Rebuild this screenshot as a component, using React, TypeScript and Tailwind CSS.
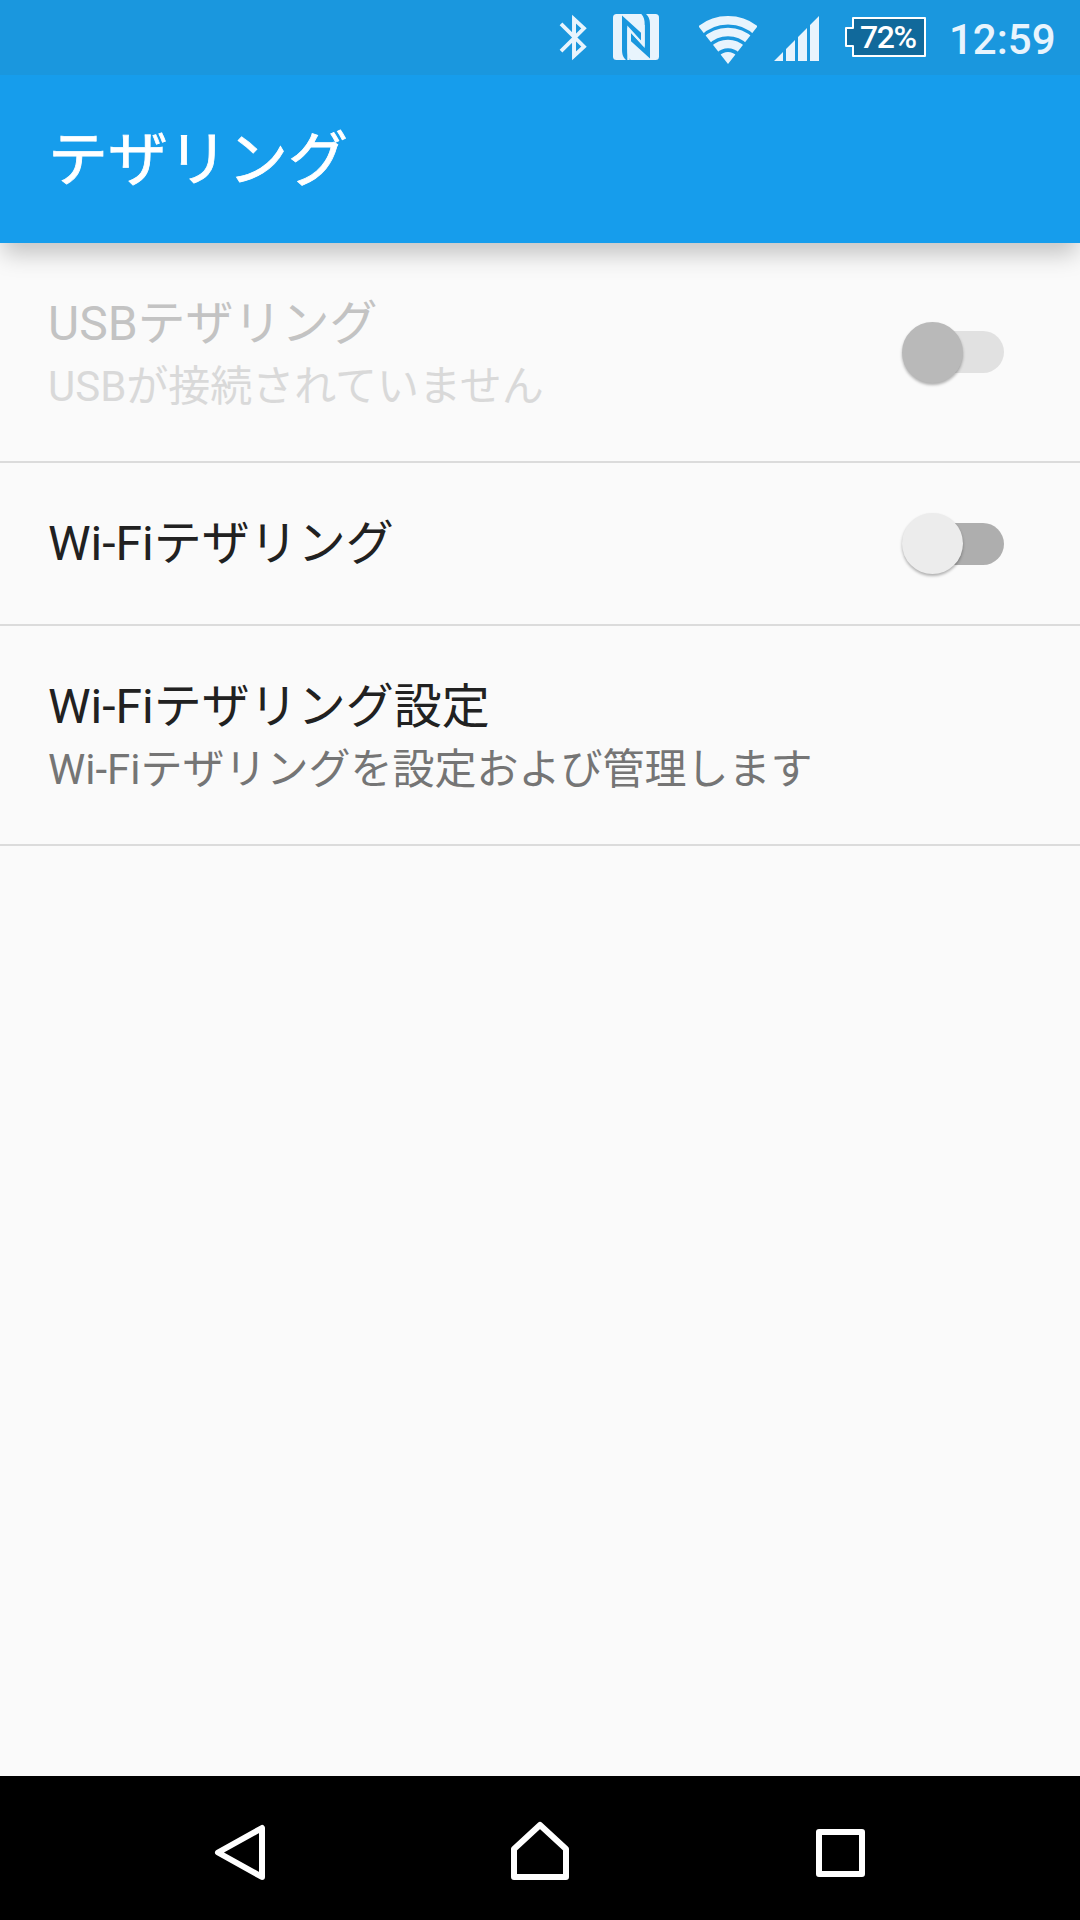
import clsx from "clsx";

type Setting = {
  title: string;
  summary?: string;
  disabled?: boolean;
  hasSwitch?: boolean;
};

const settings: Setting[] = [
  {
    title: "USBテザリング",
    summary: "USBが接続されていません",
    disabled: true,
    hasSwitch: true,
  },
  { title: "Wi-Fiテザリング", hasSwitch: true },
  {
    title: "Wi-Fiテザリング設定",
    summary: "Wi-Fiテザリングを設定および管理します",
  },
];

function BluetoothIcon() {
  return (
    <svg width="28" height="47" viewBox="0 0 28 47" className="ml-[559px]">
      <path
        d="M2 9.800L25 32.700L15 42V5L25 14.300L2 37.200"
        fill="none"
        stroke="#e8f4fd"
        strokeWidth="3.8"
      />
      <path d="M13.300 2L17 5V42L13.300 45Z" fill="#e8f4fd" />
    </svg>
  );
}

function NfcIcon() {
  return (
    <svg width="46" height="47" viewBox="0 0 46 47" className="ml-[26px]">
      <rect width="46" height="46" rx="3.5" fill="#e8f4fd" />
      <g fill="#1a97de">
        <path d="M9 1.500L28 18.700V27.700L14.300 13.300V35C14.300 40 15 43 17.700 46H13C9.500 43 9 39 9 35Z" />
        <path d="M37 44.500L18 27.300V18.300L31.700 32.700V11C31.700 6 31 3 28.300 0H33C36.500 3 37 7 37 11Z" />
      </g>
      <path
        d="M15.500 46V14.500L30.500 31V11"
        fill="none"
        stroke="#e8f4fd"
        strokeWidth="2.4"
      />
      <path
        d="M15.500 15V35M30.500 31L15.500 15"
        fill="none"
        stroke="#e8f4fd"
        strokeWidth="1.5"
      />
    </svg>
  );
}

function WifiIcon() {
  return (
    <svg
      width="58"
      height="48"
      viewBox="0 0 58 48"
      className="mt-[5px] ml-[40px]"
    >
      <clipPath id="wifi-cone">
        <path d="M29 48L-4 6V-2H62V6Z" />
      </clipPath>
      <g clipPath="url(#wifi-cone)" fill="none" stroke="#e8f4fd">
        <circle cx="29" cy="48" r="43.700" strokeWidth="8.600" />
        <circle cx="29" cy="48" r="32" strokeWidth="8.600" />
        <circle cx="29" cy="48" r="20" strokeWidth="8.600" />
        <circle cx="29" cy="48" r="6" strokeWidth="12" />
      </g>
    </svg>
  );
}

function SignalIcon() {
  return (
    <svg
      width="45"
      height="45"
      viewBox="0 0 45 45"
      fill="#e8f4fd"
      className="mt-[2px] ml-[17px]"
    >
      <path d="M0 45L9 36V45ZM12 45V33L21 24V45ZM24 45V21L33 12V45ZM36 45V9L45 0V45Z" />
    </svg>
  );
}

function Battery() {
  return (
    <div className="relative mb-px ml-[26px] h-10 w-[81px]">
      <svg width="81" height="40" viewBox="0 0 81 40" className="block">
        <path
          d="M8 1H80V39H8V29H1V11H8Z"
          fill="#11699b"
          stroke="#fff"
          strokeWidth="2"
          strokeLinejoin="round"
        />
      </svg>
      <span className="absolute top-0 left-[15px] text-[32px] leading-10 font-medium tracking-[-1.5px] text-white">
        72%
      </span>
    </div>
  );
}

function StatusBar() {
  return (
    <div className="z-20 flex h-[75px] shrink-0 items-center bg-[#1a97de]">
      <BluetoothIcon />
      <NfcIcon />
      <WifiIcon />
      <SignalIcon />
      <Battery />
      <span className="mt-[4px] ml-[23px] text-[42px] leading-none font-medium text-[#e8f4fd]">
        12:59
      </span>
    </div>
  );
}

function Switch({ disabled }: { disabled?: boolean }) {
  return (
    <span
      role="switch"
      aria-checked={false}
      className="mr-[76px] flex h-[61px] w-[102px] items-center"
    >
      <span
        className={clsx(
          "z-10 size-[61px] shrink-0 rounded-full shadow-[0_2px_3px_rgba(0,0,0,0.3)]",
          disabled ? "bg-[#b9b9b9]" : "bg-[#ececec]"
        )}
      />
      <span
        className={clsx(
          "-ml-10 h-[42px] flex-1 rounded-full",
          disabled ? "bg-[#e1e1e1]" : "bg-[#aeaeae]"
        )}
      />
    </span>
  );
}

function SettingRow({ setting }: { setting: Setting }) {
  const { title, summary, disabled, hasSwitch } = setting;

  return (
    <li
      className={clsx(
        "flex items-center justify-between border-b-2 border-[#dbdbdb] pl-12",
        summary ? "h-[220px]" : "h-[163px]"
      )}
    >
      <div className={clsx("whitespace-nowrap", summary && "pt-[5px]")}>
        <p
          className={clsx(
            "text-[48px] leading-[64px]",
            disabled ? "text-[#c3c3c3]" : "text-[#212121]"
          )}
        >
          {title}
        </p>
        {summary && (
          <p
            className={clsx(
              "text-[42px] leading-[61px]",
              disabled ? "text-[#d9d9d9]" : "text-[#757575]"
            )}
          >
            {summary}
          </p>
        )}
      </div>
      {hasSwitch && <Switch disabled={disabled} />}
    </li>
  );
}

function NavBar() {
  return (
    <nav className="flex h-36 items-center bg-black pt-[5px]">
      <svg width="1080" height="60" viewBox="0 0 1080 60">
        <g
          fill="none"
          stroke="#fff"
          strokeWidth="6"
          strokeLinejoin="round"
        >
          <path d="M262 7V56L218 31.500Z" />
          <path d="M514 56V28L540 4L566 28V56Z" />
          <path d="M819 11H862V53H819Z" />
        </g>
      </svg>
    </nav>
  );
}

export default function App() {
  return (
    <div className="flex h-[1920px] w-[1080px] flex-col overflow-hidden bg-[#fafafa] font-[Roboto,'Noto_Sans_CJK_JP',sans-serif]">
      <StatusBar />
      <header className="z-10 flex h-[168px] shrink-0 items-center bg-[#169dec] pl-12 shadow-[0_14px_22px_-3px_rgba(0,0,0,0.22)]">
        <h1 className="pt-[3px] text-[60px] leading-none text-white [-webkit-text-stroke:0.8px_#fff]">
          テザリング
        </h1>
      </header>
      <ul className="flex-1">
        {settings.map((setting) => (
          <SettingRow key={setting.title} setting={setting} />
        ))}
      </ul>
      <NavBar />
    </div>
  );
}
